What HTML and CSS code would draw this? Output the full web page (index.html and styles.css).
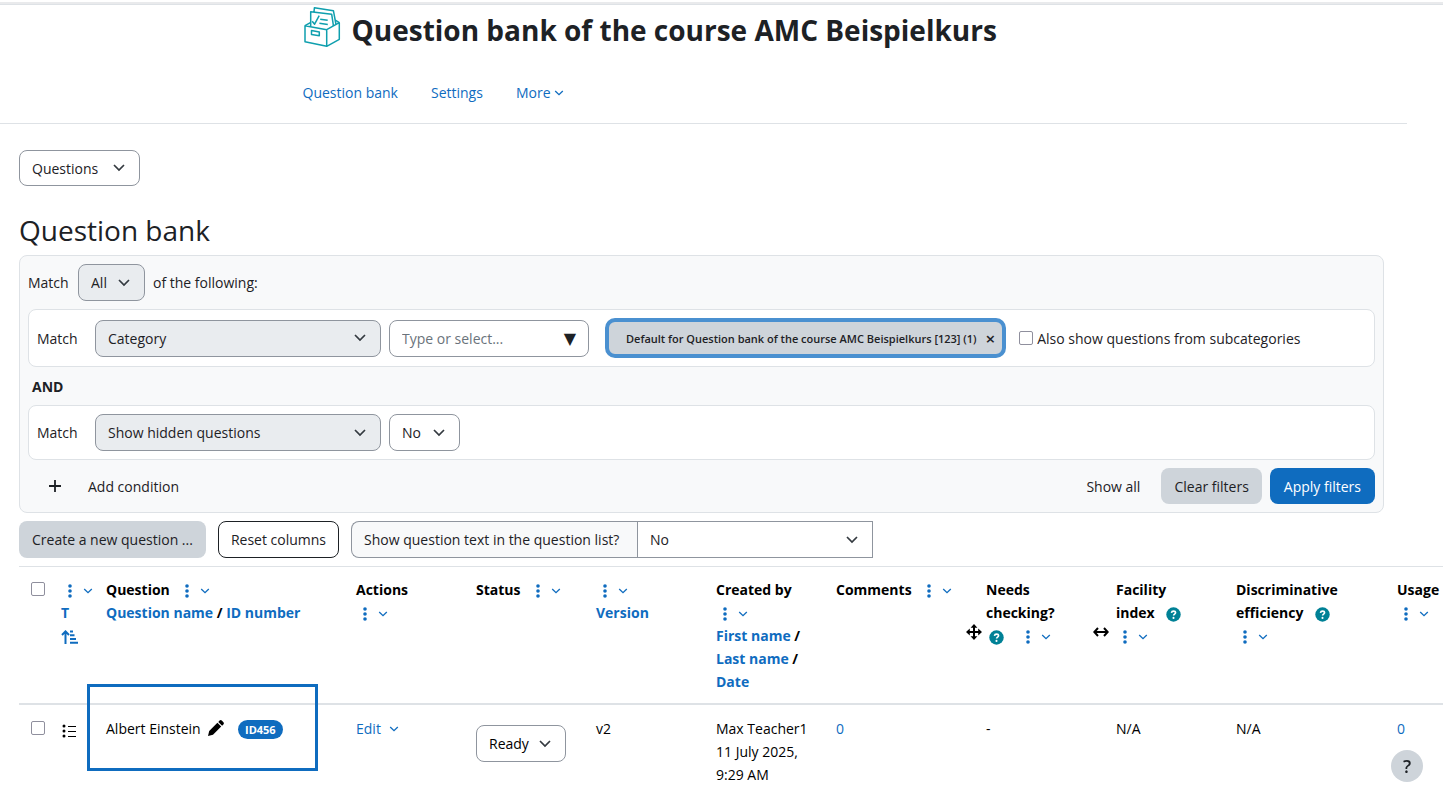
FILE: index.html
```
<!DOCTYPE html>
<html lang="en">
<head>
    <meta charset="UTF-8">
    <meta name="viewport" content="width=device-width, initial-scale=1.0">
    <title>Question bank</title>
    <link rel="stylesheet" href="styles.css">
</head>
<body>

<svg class="sprite" aria-hidden="true">
    <symbol id="dots" viewBox="0 0 4 14">
        <circle cx="2" cy="2" r="1.8"/><circle cx="2" cy="7" r="1.8"/><circle cx="2" cy="12" r="1.8"/>
    </symbol>
    <symbol id="chevron" viewBox="0 0 10 6">
        <path d="M1.2 1l3.8 3.7L8.8 1" fill="none" stroke="currentColor" stroke-width="1.3"/>
    </symbol>
    <symbol id="help" viewBox="0 0 16 16">
        <circle cx="8" cy="8" r="7.7"/>
        <path d="M5.8 6.2c.2-1.2 1.1-1.8 2.2-1.8 1.3 0 2.2.7 2.2 1.8 0 1.4-2.1 1.5-2.1 2.9" fill="none" stroke="#fff" stroke-width="1.7"/>
        <circle cx="8" cy="11.6" r="1.1" fill="#fff"/>
    </symbol>
</svg>

<div class="topbar"></div>

<header class="page-header">
    <div class="header-inner">
        <div class="title-row">
            <svg class="course-icon" viewBox="0 0 40 42" fill="none" stroke="#0f9fae" stroke-width="1.5" stroke-linejoin="round">
                <path d="M2 19.7l21.7 4v16.6L2 35.7zM23.7 23.7L36.3 16.7v16.6l-12.6 7M2 19.7l5.4-3M36.3 16.7l-4-2.5"/>
                <path d="M7.7 20.4V5.7l21 2.6 1.6 10.6-.3 1M11 5.8l.4-4.1 19 3 2.6 13.8"/>
                <path d="M9.2 15.2l2.4 3 4.6-8.6M17.2 13.2l7.5 1.1M16.4 17.2l8.4 1.2"/>
                <path d="M8.5 24.5l7.8 1.4v3.8l-7.8-1.3z"/>
            </svg>
            <h1>Question bank of the course AMC Beispielkurs</h1>
        </div>
        <nav class="tabs">
            <a href="#">Question bank</a>
            <a href="#">Settings</a>
            <a href="#">More <svg class="chev"><use href="#chevron"/></svg></a>
        </nav>
    </div>
</header>

<main>
    <select class="select questions-nav" aria-label="Question bank navigation"><option>Questions</option></select>

    <h2>Question bank</h2>

    <form class="filters">
        <div class="match-row">
            <label for="join">Match</label>
            <select class="select shaded join" id="join"><option>All</option></select>
            <span>of the following:</span>
        </div>

        <div class="condition">
            <label for="cond1">Match</label>
            <select class="select shaded type" id="cond1"><option>Category</option></select>
            <div class="combo">
                <input type="text" placeholder="Type or select..." aria-label="Category">
                <span class="combo-arrow">&#9660;</span>
            </div>
            <button type="button" class="tag">Default for Question bank of the course AMC Beispielkurs [123] (1) <span class="tag-x">&times;</span></button>
            <input type="checkbox" id="subcats">
            <label for="subcats" class="subcats-label">Also show questions from subcategories</label>
        </div>

        <div class="joiner">AND</div>

        <div class="condition">
            <label for="cond2">Match</label>
            <select class="select shaded type" id="cond2"><option>Show hidden questions</option></select>
            <select class="select hidden-value" aria-label="Show hidden questions"><option>No</option></select>
        </div>

        <div class="filter-actions">
            <button type="button" class="btn btn-link add">
                <svg width="12" height="12" viewBox="0 0 12 12"><path d="M6 0v12M0 6h12" stroke="currentColor" stroke-width="1.8"/></svg>
                Add condition
            </button>
            <button type="button" class="btn btn-link show-all">Show all</button>
            <button type="button" class="btn btn-secondary">Clear filters</button>
            <button type="button" class="btn btn-primary">Apply filters</button>
        </div>
    </form>

    <div class="toolbar">
        <button type="button" class="btn btn-secondary">Create a new question ...</button>
        <button type="button" class="btn btn-outline">Reset columns</button>
        <div class="input-group">
            <label for="qtext">Show question text in the question list?</label>
            <select class="select" id="qtext"><option>No</option></select>
        </div>
    </div>

    <table>
        <colgroup>
            <col class="c-check"><col class="c-type"><col class="c-question"><col><col><col><col>
            <col class="c-comments"><col class="c-needs"><col><col class="c-disc"><col>
        </colgroup>
        <thead>
            <tr>
                <th><input type="checkbox" aria-label="Select all"></th>
                <th>
                    <a href="#" class="handle"><svg class="dots"><use href="#dots"/></svg><svg class="chev"><use href="#chevron"/></svg></a><br>
                    <a href="#">T</a><br>
                    <a href="#" aria-label="Ascending"><svg class="sort" viewBox="0 0 18 14" fill="none" stroke="currentColor" stroke-width="2">
                        <path d="M4.500 14V2M1 5l3.500-3.600L8 5M9 1.500h3M9 5.200h4.500M9 9h6M9 12.800h8"/></svg></a>
                </th>
                <th>
                    Question <a href="#" class="handle after-text"><svg class="dots"><use href="#dots"/></svg><svg class="chev"><use href="#chevron"/></svg></a><br>
                    <a href="#">Question name</a> / <a href="#">ID number</a>
                </th>
                <th>
                    Actions<br>
                    <a href="#" class="handle"><svg class="dots"><use href="#dots"/></svg><svg class="chev"><use href="#chevron"/></svg></a>
                </th>
                <th>Status <a href="#" class="handle after-text"><svg class="dots"><use href="#dots"/></svg><svg class="chev"><use href="#chevron"/></svg></a></th>
                <th>
                    <a href="#" class="handle"><svg class="dots"><use href="#dots"/></svg><svg class="chev"><use href="#chevron"/></svg></a><br>
                    <a href="#">Version</a>
                </th>
                <th>
                    Created by<br>
                    <a href="#" class="handle"><svg class="dots"><use href="#dots"/></svg><svg class="chev"><use href="#chevron"/></svg></a><br>
                    <a href="#">First name</a> /<br>
                    <a href="#">Last name</a> /<br>
                    <a href="#">Date</a>
                </th>
                <th>Comments <a href="#" class="handle after-text"><svg class="dots"><use href="#dots"/></svg><svg class="chev"><use href="#chevron"/></svg></a></th>
                <th>
                    Needs<br>checking?<br>
                    <a href="#" class="help" aria-label="Help"><svg><use href="#help"/></svg></a>
                    <a href="#" class="handle after-text"><svg class="dots"><use href="#dots"/></svg><svg class="chev"><use href="#chevron"/></svg></a>
                    <svg class="grip grip-move" viewBox="0 0 16 16"><path d="M8 2v12M2 8h12" stroke="#000" stroke-width="2"/><path d="M8 0l3.400 3.800H4.600zM8 16l3.400-3.800H4.600zM0 8l3.800-3.400v6.800zM16 8l-3.800-3.400v6.800z"/></svg>
                    <svg class="grip grip-resize" viewBox="0 0 16 16"><path d="M1.500 8h13M5 4L1.300 8 5 12M11 4l3.700 4-3.700 4" fill="none" stroke="#000" stroke-width="2"/></svg>
                </th>
                <th>
                    Facility<br>index <a href="#" class="help after-text" aria-label="Help"><svg><use href="#help"/></svg></a><br>
                    <a href="#" class="handle"><svg class="dots"><use href="#dots"/></svg><svg class="chev"><use href="#chevron"/></svg></a>
                </th>
                <th>
                    Discriminative<br>efficiency <a href="#" class="help after-text" aria-label="Help"><svg><use href="#help"/></svg></a><br>
                    <a href="#" class="handle"><svg class="dots"><use href="#dots"/></svg><svg class="chev"><use href="#chevron"/></svg></a>
                </th>
                <th>
                    Usage<br>
                    <a href="#" class="handle"><svg class="dots"><use href="#dots"/></svg><svg class="chev"><use href="#chevron"/></svg></a>
                </th>
            </tr>
        </thead>
        <tbody>
            <tr>
                <td><input type="checkbox" aria-label="Select Albert Einstein"></td>
                <td>
                    <svg class="qtype" viewBox="0 0 14 14"><circle cx="2" cy="2" r="1.500"/><circle cx="2" cy="7" r="1.500"/><circle cx="2" cy="12" r="1.500"/><path d="M6 2.500h8M6 7.500h8M6 12.500h8" stroke="#000"/></svg>
                </td>
                <td class="highlight">
                    Albert Einstein
                    <svg class="pencil" viewBox="0 0 16 16"><path d="M0 16l1.200-5L9.400 2.800l3.800 3.800L5 14.800zM10.300 1.900l1.300-1.300c.7-.7 1.500-.7 2.200 0l1.600 1.600c.7.7.7 1.500 0 2.200l-1.300 1.300z"/></svg>
                    <span class="badge">ID456</span>
                </td>
                <td><a href="#">Edit <svg class="chev edit-chev"><use href="#chevron"/></svg></a></td>
                <td><select class="select status" aria-label="Status"><option>Ready</option></select></td>
                <td>v2</td>
                <td>Max Teacher1<br>11 July 2025,<br>9:29 AM</td>
                <td><a href="#">0</a></td>
                <td>-</td>
                <td>N/A</td>
                <td>N/A</td>
                <td><a href="#">0</a></td>
            </tr>
        </tbody>
    </table>
</main>

<button type="button" class="footer-help" aria-label="Show footer">?</button>

</body>
</html>
```
FILE: styles.css
```
*, *::after {
    box-sizing: border-box;
}

body {
    margin: 0;
    min-height: 100vh;
    overflow: hidden;
    font-family: "Open Sans", "Noto Sans", sans-serif;
    font-size: 14px;
    line-height: 23px;
    color: #1d2125;
    background-color: #fff;
}

a {
    color: #0f6cbf;
    text-decoration: none;
}

input, select, button {
    font: inherit;
    color: inherit;
}

.sprite {
    display: none;
}

.topbar {
    height: 3px;
    margin-top: 2px;
    background-color: #e9eaec;
    border-bottom: 1px solid #dee2e6;
}

/* header */
.page-header {
    margin-right: 36px;
    border-bottom: 1px solid #dee2e6;
}

.header-inner {
    max-width: 802px;
    margin: 0 auto;
}

.title-row {
    display: flex;
    align-items: flex-start;
    gap: 9px;
    height: 50px;
    padding-top: 1px;
}

.course-icon {
    width: 40px;
    height: 42px;
}

h1 {
    margin: 6px 0 0;
    font-size: 28px;
    line-height: 36px;
    font-weight: 700;
    white-space: nowrap;
}

.tabs {
    display: flex;
    gap: 33px;
    padding: 26px 0 19px;
}

.chev {
    width: 10px;
    height: 6px;
    vertical-align: 2px;
}

/* form controls */
main {
    padding: 26px 59px 0 19px;
}

.select {
    display: block;
    height: 37px;
    padding: 0 12px;
    appearance: none;
    border: 1px solid #8f959e;
    border-radius: 8px;
    background: #fff url("data:image/svg+xml,%3Csvg xmlns='http://www.w3.org/2000/svg' width='12' height='8' viewBox='0 0 12 8'%3E%3Cpath d='M1 1l5 5 5-5' fill='none' stroke='%23343a40' stroke-width='1.700'/%3E%3C/svg%3E") no-repeat right 14px center;
}

.shaded {
    background-color: #e9ecef;
}

.questions-nav {
    width: 121px;
    height: 36px;
}

h2 {
    margin: 24px 0 5px;
    font-size: 28px;
    line-height: 40px;
    font-weight: 400;
}

.filters {
    padding: 8px;
    border: 1px solid #dee2e6;
    border-radius: 8px;
    background-color: #f8f9fa;
}

.match-row {
    display: flex;
    align-items: center;
    gap: 8px;
    margin-bottom: 8px;
}

.match-row label {
    width: 42px;
}

.join {
    width: 67px;
}

.condition {
    display: flex;
    align-items: center;
    padding: 8px;
    border: 1px solid #dee2e6;
    border-radius: 8px;
    background-color: #fff;
}

.condition > label:first-child {
    width: 58px;
}

.type {
    width: 286px;
    margin-right: 8px;
}

.hidden-value {
    width: 71px;
}

.combo {
    position: relative;
    width: 200px;
    margin-right: 16px;
}

.combo input {
    width: 100%;
    height: 37px;
    padding: 0 12px;
    border: 1px solid #8f959e;
    border-radius: 8px;
}

.combo input::placeholder {
    color: #6a737b;
    opacity: 1;
}

.combo-arrow {
    position: absolute;
    top: 7px;
    right: 13px;
    font-family: "DejaVu Sans", sans-serif;
    font-size: 16px;
}

.tag {
    height: 40px;
    padding: 0 7px 0 17px;
    border: 4px solid #4a90d0;
    border-radius: 10px;
    background-color: #ced4da;
    font-size: 11px;
    font-weight: 600;
    white-space: nowrap;
}

.tag-x {
    margin-left: 6px;
    font-size: 17px;
    line-height: 16px;
    vertical-align: -2px;
}

input[type="checkbox"] {
    width: 14px;
    height: 14px;
    margin: 0;
    appearance: none;
    border: 1px solid #8f8f9d;
    border-radius: 2px;
    background-color: #fff;
}

#subcats {
    margin: 0 4px 0 13px;
}

.subcats-label {
    white-space: nowrap;
}

.joiner {
    padding: 8px 4px 7px;
    font-weight: 700;
}

.filter-actions {
    display: flex;
    align-items: center;
    gap: 8px;
    margin-top: 8px;
}

.btn {
    height: 36px;
    padding: 0 12px;
    border: 1px solid transparent;
    border-radius: 8px;
    background-color: transparent;
    white-space: nowrap;
    cursor: pointer;
}

.btn-secondary {
    background-color: #ced4da;
}

.btn-primary {
    padding: 0 13px;
    background-color: #0f6cbf;
    color: #fff;
}

.btn-outline {
    border-color: #1d2125;
}

.add {
    display: flex;
    align-items: center;
    gap: 27px;
    padding-left: 20px;
}

.show-all {
    margin-left: auto;
}

.toolbar {
    display: flex;
    gap: 12px;
    margin: 8px 0;
}

.toolbar .btn {
    height: 37px;
}

.input-group {
    display: flex;
}

.input-group label {
    min-width: 286px;
    padding: 6px 12px;
    border: 1px solid #8f959e;
    border-right: 0;
    border-radius: 8px 0 0 8px;
    background-color: #f8f9fa;
}

.input-group .select {
    width: 236px;
    border-radius: 0;
}

/* question table */
table {
    width: 1486px;
    table-layout: fixed;
    border-collapse: separate;
    border-spacing: 0;
    color: #000;
}

col {
    width: 120px;
}

.c-check {
    width: 30px;
}

.c-type {
    width: 45px;
}

.c-question {
    width: 250px;
}

.c-comments {
    width: 150px;
}

.c-needs {
    width: 130px;
}

.c-disc {
    width: 161px;
}

th, td {
    padding: 12px 0 12px 12px;
    text-align: left;
    vertical-align: top;
    white-space: nowrap;
}

th {
    position: relative;
    padding-top: 11px;
    padding-bottom: 10px;
    border-top: 1px solid #dee2e6;
    border-bottom: 2px solid #dee2e6;
    font-weight: 700;
}

th input[type="checkbox"], td input[type="checkbox"] {
    display: block;
    margin-top: 4px;
}

.handle {
    display: inline-flex;
    align-items: center;
    gap: 11px;
    margin-left: 7px;
    vertical-align: middle;
}

.handle.after-text {
    margin-left: 12px;
}

.dots {
    width: 4px;
    height: 14px;
    fill: #0f6cbf;
}

.sort {
    width: 18px;
    height: 14px;
    vertical-align: middle;
}

.help {
    margin: 0 6px 0 3px;
    color: #008196;
}

.help.after-text {
    margin-left: 8px;
}

.help svg {
    width: 15px;
    height: 15px;
    fill: #008196;
    vertical-align: middle;
}

.grip {
    position: absolute;
    top: 57px;
    width: 16px;
    height: 16px;
}

.grip-move {
    left: -8px;
}

.grip-resize {
    right: -5px;
}

.qtype {
    width: 14px;
    height: 14px;
    margin-left: 1px;
    vertical-align: -4px;
}

.pencil {
    width: 16px;
    height: 16px;
    margin: 0 10px 0 4px;
    vertical-align: -2px;
}

.badge {
    padding: 2px 7px;
    border-radius: 10px;
    background-color: #0f6cbf;
    color: #fff;
    font-size: 11px;
    font-weight: 700;
}

/* frame drawn over the question cell */
.highlight {
    position: relative;
}

.highlight::after {
    content: "";
    position: absolute;
    top: -21px;
    left: -7px;
    width: 231px;
    height: 87px;
    border: 3px solid #0f6cbf;
}

.edit-chev {
    margin-left: 4px;
}

.status {
    width: 90px;
    margin-top: 8px;
}

.footer-help {
    position: fixed;
    right: 20px;
    bottom: 8px;
    width: 32px;
    height: 32px;
    padding: 0;
    border: 0;
    border-radius: 50%;
    background-color: #ced4da;
    font-size: 18px;
    font-weight: 600;
}
```
